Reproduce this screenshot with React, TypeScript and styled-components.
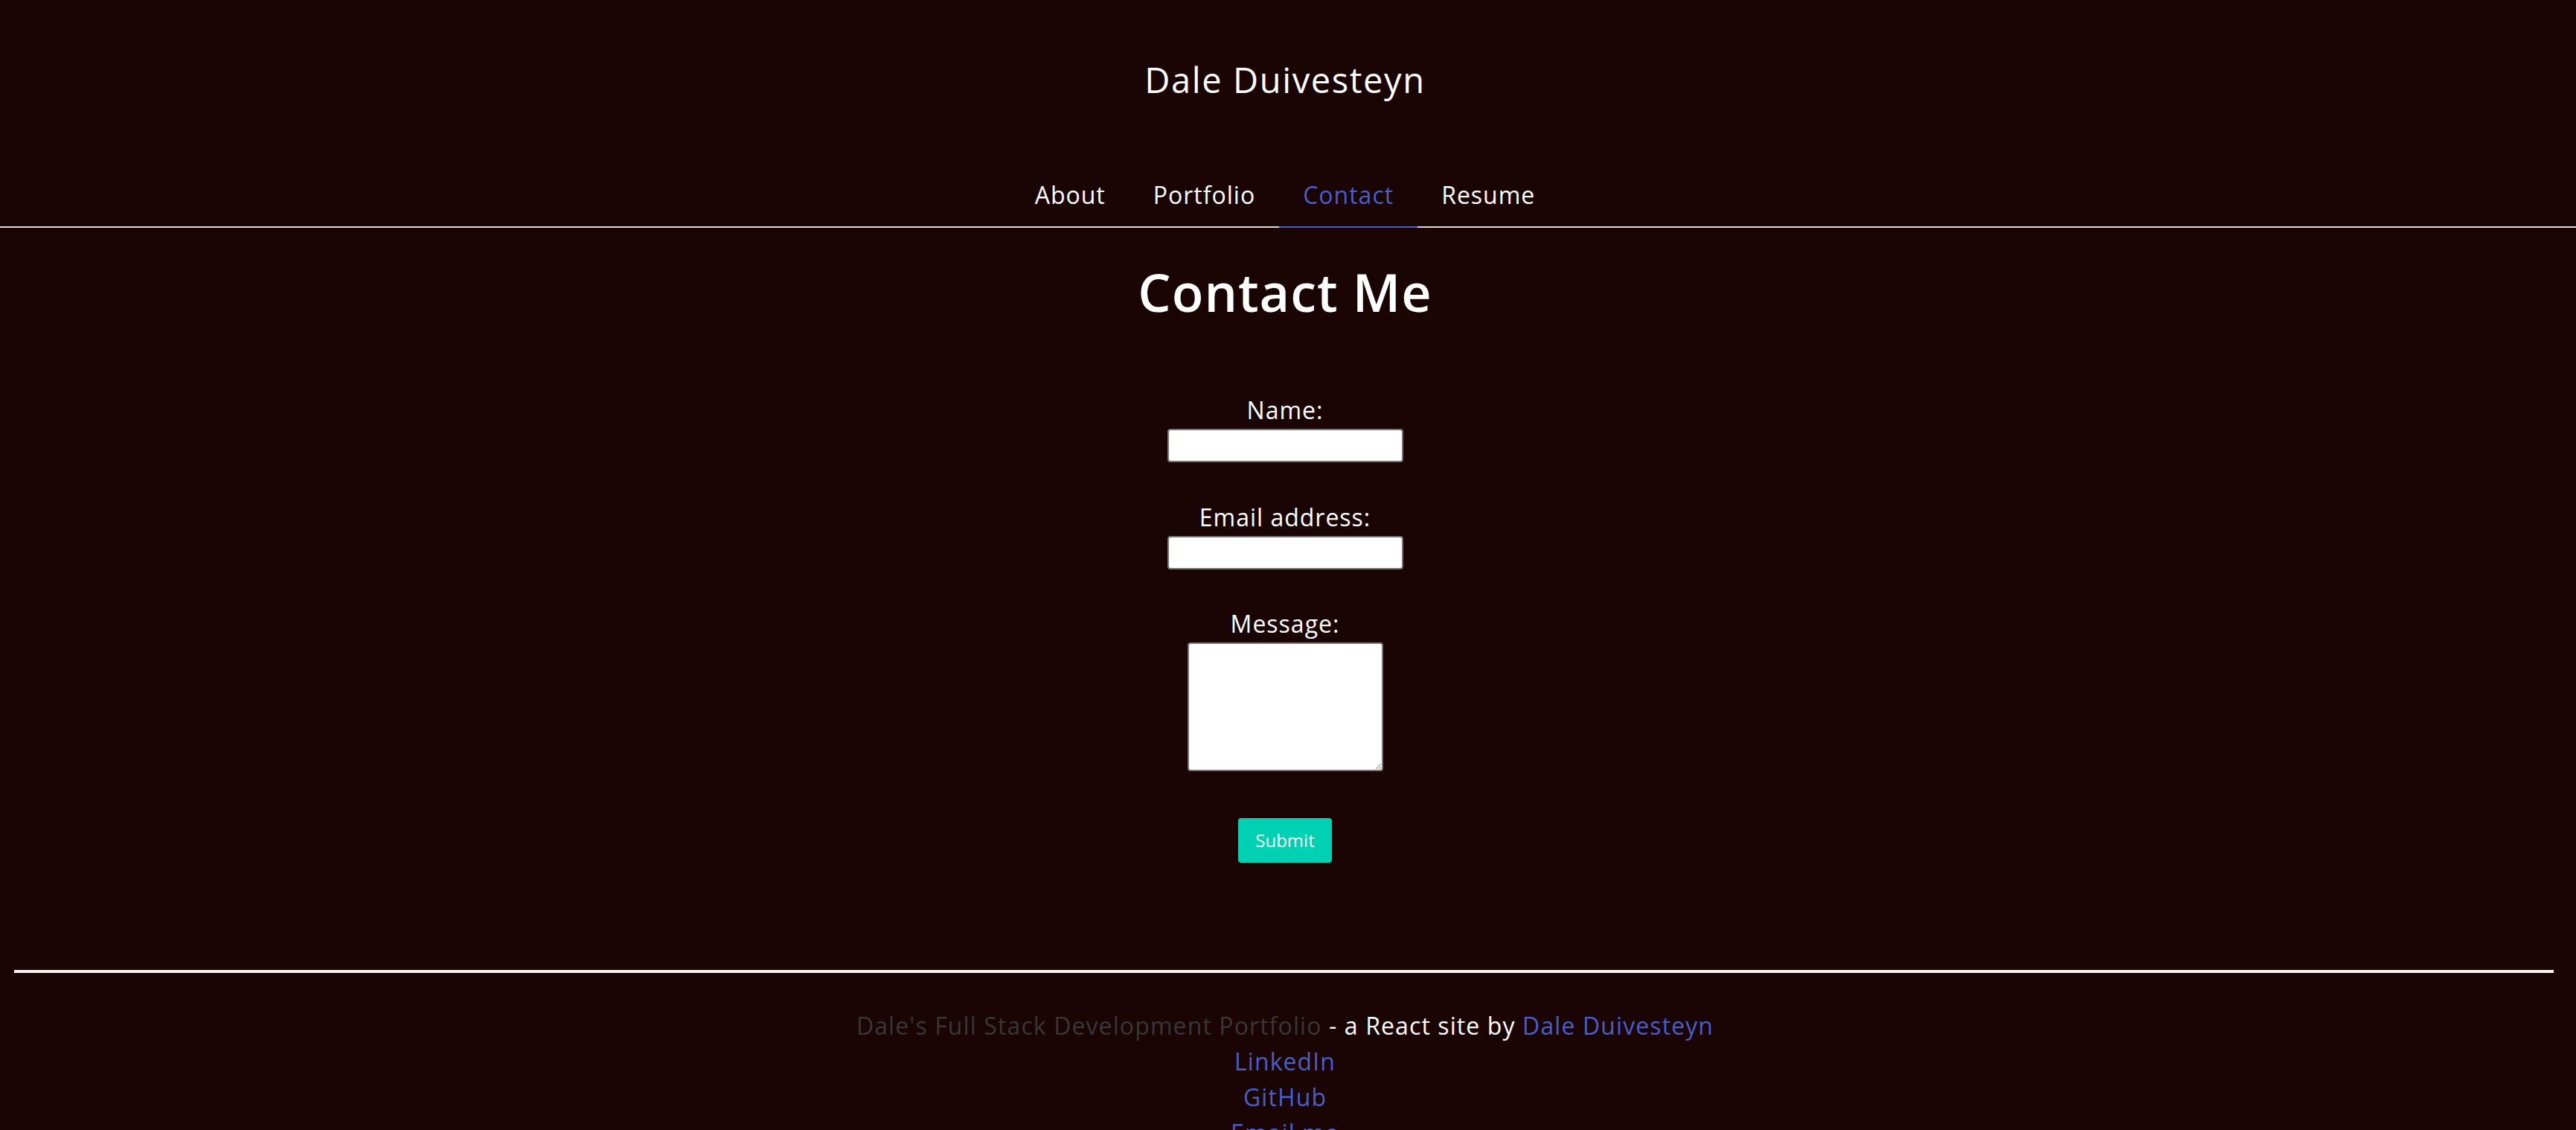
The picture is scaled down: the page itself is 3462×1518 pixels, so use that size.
import React from "react";
import styled, { createGlobalStyle } from "styled-components";

const GlobalStyle = createGlobalStyle`
  html, body {
    margin: 0;
    padding: 0;
    background: #1a0404;
  }
  body {
    font-family: "Open Sans", "Liberation Sans", sans-serif;
    color: #ffffff;
  }
  * { box-sizing: border-box; }
`;

const Page = styled.div`
  display: flex;
  flex-direction: column;
  min-height: 1518px;
`;

const Header = styled.header`
  display: flex;
  flex-direction: column;
  align-items: stretch;
  padding-top: 73px;
`;

const SiteTitle = styled.h1`
  margin: 0 8px 0 0;
  font-size: 47px;
  font-weight: 400;
  line-height: 69px;
  letter-spacing: 1.6px;
  text-align: center;
  color: #ffffff;
`;

const Tabs = styled.ul`
  list-style: none;
  margin: 80px 0 0;
  padding: 0 8px 0 0;
  display: flex;
  justify-content: center;
  border-bottom: 2px solid #dbdbdb;
`;

const Tab = styled.li`
  display: block;
`;

const TabLink = styled.a<{ $active?: boolean }>`
  display: block;
  padding: 16px 32px 18px;
  font-size: 32px;
  line-height: 48px;
  letter-spacing: 1px;
  text-decoration: none;
  color: ${(p) => (p.$active ? "#485fc7" : "#ffffff")};
  border-bottom: 2px solid ${(p) => (p.$active ? "#485fc7" : "transparent")};
  margin-bottom: -2px;
  cursor: pointer;
`;

const Main = styled.main`
  display: flex;
  flex-direction: column;
  align-items: center;
  padding: 44px 8px 0 0;
`;

const Heading = styled.h2`
  margin: 0;
  font-size: 70px;
  font-weight: 600;
  line-height: 84px;
  letter-spacing: 1px;
  color: #ffffff;
`;

const Form = styled.form`
  display: flex;
  flex-direction: column;
  align-items: center;
  margin-top: 93px;
`;

const Field = styled.div<{ $gapTop?: number }>`
  display: flex;
  flex-direction: column;
  align-items: center;
  gap: 1px;
  margin-top: ${(p) => p.$gapTop ?? 0}px;
`;

const Label = styled.label`
  font-size: 32px;
  line-height: 48px;
  letter-spacing: 1px;
  color: #ffffff;
`;

const TextInput = styled.input`
  width: 317px;
  height: 45px;
  border: 2px solid #767676;
  border-radius: 4px;
  background: #ffffff;
  font-size: 26px;
  padding: 2px 4px;
  margin: 0;
`;

const TextArea = styled.textarea`
  display: block;
  width: 263px;
  height: 173px;
  border: 2px solid #767676;
  border-radius: 4px;
  background: #ffffff;
  font-size: 26px;
  margin: 0;
`;

const SubmitButton = styled.button`
  margin-top: 63px;
  width: 126px;
  height: 60px;
  border: none;
  border-radius: 4px;
  background: #00d1b2;
  color: #ffffff;
  font-family: "Open Sans", "Liberation Sans", sans-serif;
  font-size: 24px;
  line-height: 1;
  display: flex;
  align-items: center;
  justify-content: center;
  cursor: pointer;
`;

const Footer = styled.footer`
  display: flex;
  flex-direction: column;
  margin-top: 144px;
`;

const Rule = styled.hr`
  margin: 0 30px 0 19px;
  height: 4px;
  border: none;
  background: #f5f5f5;
`;

const FooterBody = styled.div`
  display: flex;
  flex-direction: column;
  align-items: center;
  margin-top: 47px;
  padding-right: 8px;
  font-size: 32px;
  line-height: 48px;
  letter-spacing: 1.1px;
`;

const Credit = styled.p`
  margin: 0;
  color: #ffffff;
  white-space: nowrap;
`;

const Muted = styled.span`
  color: #373737;
`;

const Link = styled.a`
  color: #485fc7;
  text-decoration: none;
`;

export default function App() {
  return (
    <>
      <GlobalStyle />
      <Page>
        <Header>
          <SiteTitle>Dale Duivesteyn</SiteTitle>
          <Tabs>
            <Tab><TabLink>About</TabLink></Tab>
            <Tab><TabLink>Portfolio</TabLink></Tab>
            <Tab><TabLink $active>Contact</TabLink></Tab>
            <Tab><TabLink>Resume</TabLink></Tab>
          </Tabs>
        </Header>
        <Main>
          <Heading>Contact Me</Heading>
          <Form onSubmit={(e) => e.preventDefault()}>
            <Field>
              <Label htmlFor="name">Name:</Label>
              <TextInput id="name" type="text" />
            </Field>
            <Field $gapTop={50}>
              <Label htmlFor="email">Email address:</Label>
              <TextInput id="email" type="email" />
            </Field>
            <Field $gapTop={49}>
              <Label htmlFor="message">Message:</Label>
              <TextArea id="message" />
            </Field>
            <SubmitButton type="submit">Submit</SubmitButton>
          </Form>
        </Main>
        <Footer>
          <Rule />
          <FooterBody>
            <Credit>
              <Muted>Dale's Full Stack Development Portfolio</Muted> - a React site by{" "}
              <Link>Dale Duivesteyn</Link>
            </Credit>
            <Link>LinkedIn</Link>
            <Link>GitHub</Link>
            <Link>Email me</Link>
          </FooterBody>
        </Footer>
      </Page>
    </>
  );
}
